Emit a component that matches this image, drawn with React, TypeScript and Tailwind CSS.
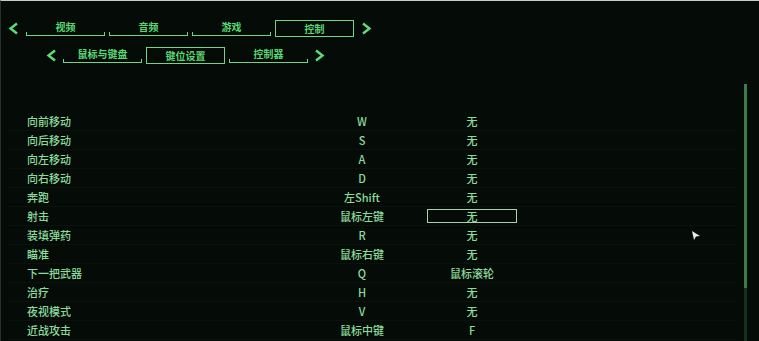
const topTabs = ["视频", "音频", "游戏", "控制"];
const subTabs = ["鼠标与键盘", "键位设置", "控制器"];

const bindings: [string, string, string][] = [
  ["向前移动", "W", "无"],
  ["向后移动", "S", "无"],
  ["向左移动", "A", "无"],
  ["向右移动", "D", "无"],
  ["奔跑", "左Shift", "无"],
  ["射击", "鼠标左键", "无"],
  ["装填弹药", "R", "无"],
  ["瞄准", "鼠标右键", "无"],
  ["下一把武器", "Q", "鼠标滚轮"],
  ["治疗", "H", "无"],
  ["夜视模式", "V", "无"],
  ["近战攻击", "鼠标中键", "F"],
];

const Chevron = ({ dir }: { dir: "left" | "right" }) => (
  <svg width="11" height="13" viewBox="0 0 11 13" className="shrink-0">
    <polyline
      points={dir === "left" ? "9,1.5 2.5,6.5 9,11.5" : "2,1.5 8.5,6.5 2,11.5"}
      fill="none"
      stroke="#5ddc78"
      strokeWidth="2.4"
    />
  </svg>
);

const Tab = ({ label, active }: { label: string; active?: boolean }) =>
  active ? (
    <div className="w-[79px] h-[17px] border-[1.5px] border-[#6fd488] flex items-center justify-center text-[10px] font-bold text-[#58d872]">
      {label}
    </div>
  ) : (
    <div className="w-[79px] h-[17px] flex flex-col">
      <div className="flex-1 flex items-center justify-center text-[10px] font-bold text-[#58d872] leading-none pt-[1px]">
        {label}
      </div>
      <div className="h-[4px] mb-[1px] border-x-[1.5px] border-b-[1.5px] border-[#6fd488]" />
    </div>
  );

export default function App() {
  return (
    <div
      className="relative w-[759px] h-[341px] overflow-hidden bg-[#050b07] border-t border-[#c9cbc9] border-l border-l-[#2c302d] flex flex-col"
      style={{ fontFamily: '"Noto Sans CJK SC", "Noto Sans", sans-serif' }}
    >
      {/* top tabs */}
      <div className="mt-[19px] h-[17px] flex items-center pl-[7px]">
        <Chevron dir="left" />
        <div className="ml-[7px] flex gap-[4px]">
          {topTabs.map((t) => (
            <Tab key={t} label={t} active={t === "控制"} />
          ))}
        </div>
        <div className="ml-[7px]">
          <Chevron dir="right" />
        </div>
      </div>

      {/* sub tabs */}
      <div className="mt-[10px] h-[17px] flex items-center pl-[45px]">
        <Chevron dir="left" />
        <div className="ml-[6px] flex gap-[4px]">
          {subTabs.map((t) => (
            <Tab key={t} label={t} active={t === "键位设置"} />
          ))}
        </div>
        <div className="ml-[6px]">
          <Chevron dir="right" />
        </div>
      </div>

      {/* bindings list */}
      <div className="mt-[20px] flex-1 flex">
        <div className="flex-1 pt-[28px] pl-[7px] pr-[7px] text-[11px] font-medium text-[#8bdc9b]">
          {bindings.map(([action, key, alt]) => (
            <div key={action} className="h-[19px] flex items-center border-b border-[#0a120b]">
              <div className="w-[304px] pl-[19px]">{action}</div>
              <div className="w-[100px] text-center">{key}</div>
              <div className="ml-[10px] w-[100px] flex justify-center">
                {action === "射击" ? (
                  <div className="w-[90px] h-[14px] border border-[#a9cfb2] flex items-center justify-center">
                    {alt}
                  </div>
                ) : (
                  alt
                )}
              </div>
            </div>
          ))}
        </div>

        {/* scrollbar */}
        <div className="w-[3px] mr-[12px] flex flex-col">
          <div className="h-[204px] bg-[#3e7b4b]" />
          <div className="flex-1 bg-[#16301c]" />
        </div>
      </div>

      {/* mouse cursor */}
      <svg width="10" height="11" viewBox="0 0 10 11" className="absolute left-[690px] top-[229px]">
        <polygon points="1,1 9,6 5,6.5 3,10" fill="#e8ece8" />
      </svg>
    </div>
  );
}
